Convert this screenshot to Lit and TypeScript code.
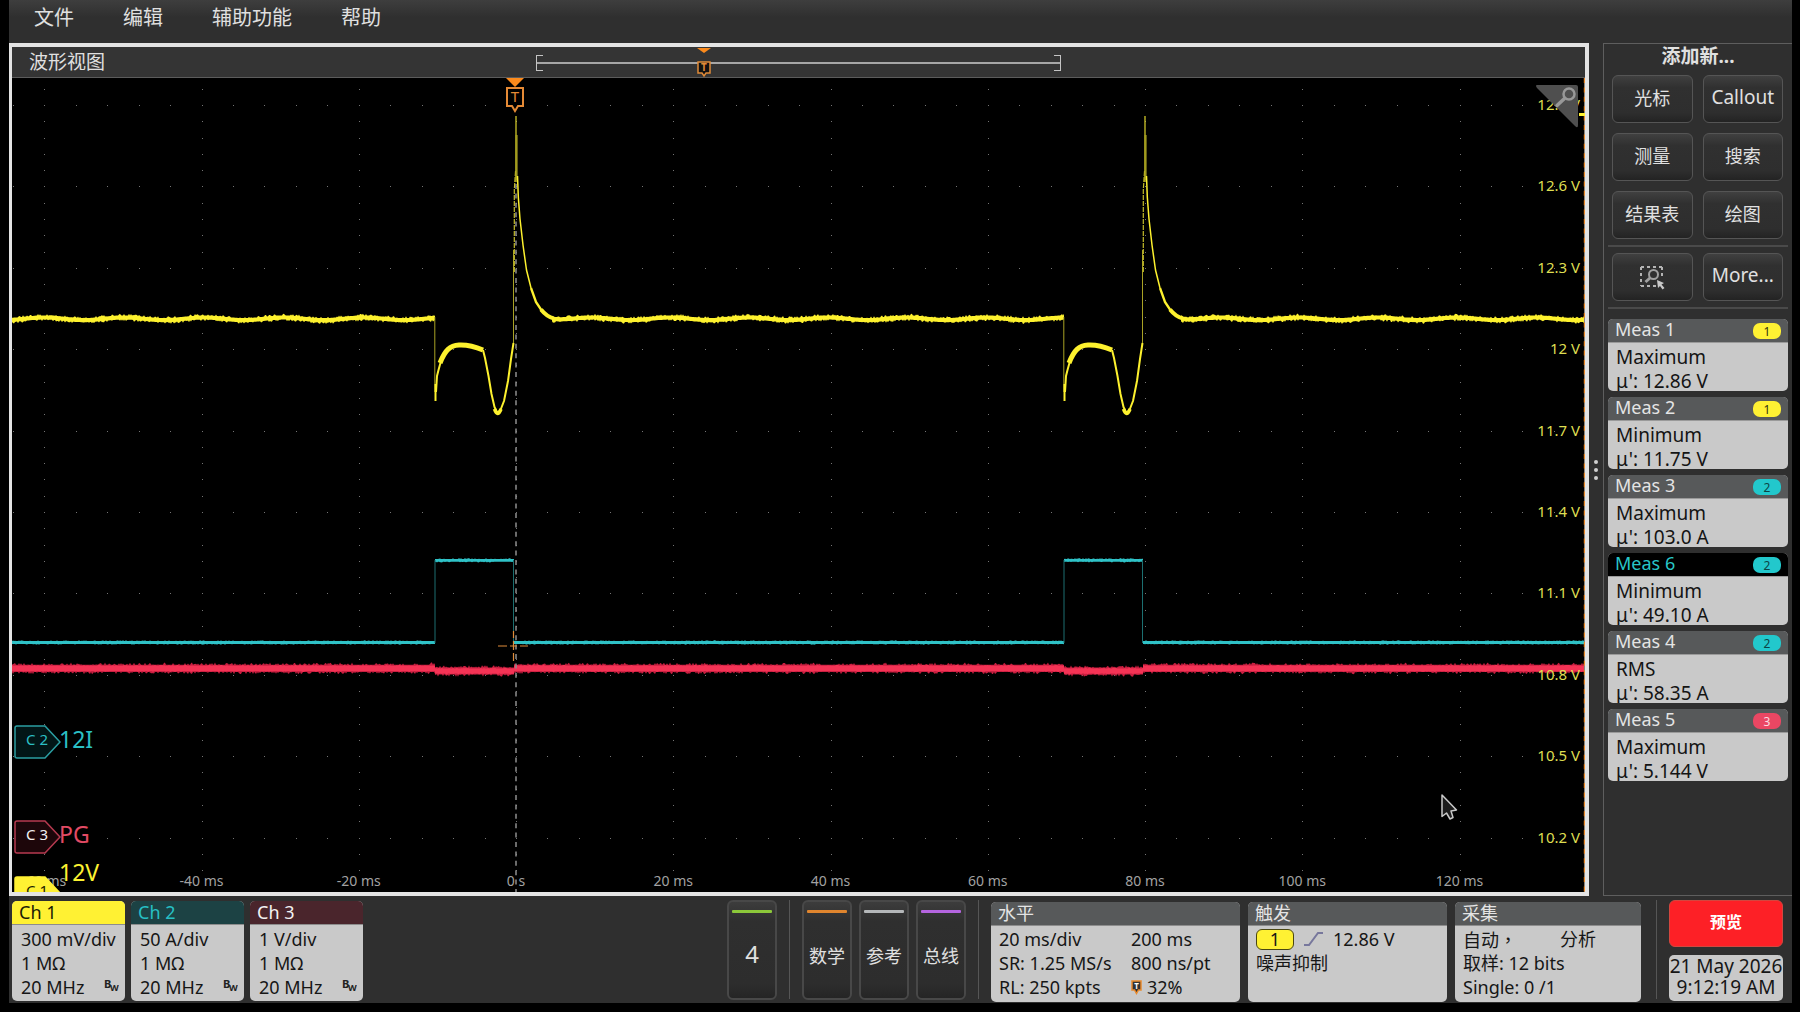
import { LitElement, html, css, svg } from "lit";
import { customElement, property } from "lit/decorators.js";
import { styleMap } from "lit/directives/style-map.js";

/* Extent of the graticule in drawing units; traces are given in these. */
const VIEW = { x: 12, y: 78, w: 1573, h: 814 };
const DIV_X = 157.25;
const DIV_Y = 81.4;
const ZERO_X = 516;
const TOP_Y = 105;
const PERIOD = DIV_X * 4;

const px = (x: number) => `${((x - VIEW.x) / VIEW.w) * 100}%`;
const py = (y: number) => `${((y - VIEW.y) / VIEW.h) * 100}%`;

type Centre = (x: number) => number;

function noise(seed: number) {
  let s = seed;
  return () => {
    s = (s * 1103515245 + 12345) % 2147483648;
    return s / 2147483648;
  };
}

/* A flat stretch of signal, drawn as a band whose edges jitter. */
function band(x0: number, x1: number, centre: Centre, half: number, jitter: number, seed: number) {
  const rnd = noise(seed);
  const top: string[] = [];
  const bottom: string[] = [];
  for (let x = x0; x <= x1; x += 1) {
    const a = rnd() > 0.6 ? rnd() * jitter : 0;
    const b = rnd() > 0.6 ? rnd() * jitter : 0;
    top.push(`${x.toFixed(1)} ${(centre(x) - half - a).toFixed(1)}`);
    bottom.push(`${x.toFixed(1)} ${(centre(x) + half + b).toFixed(1)}`);
  }
  return `M${top.join("L")}L${bottom.reverse().join("L")}Z`;
}

const ripple: Centre = (x) => 318.8 - 1.3 * Math.cos((2 * Math.PI * (x - 44)) / 80);
const rippleAfter = (start: number): Centre => (x) =>
  318.8 - 1.3 * Math.cos((2 * Math.PI * (x - start - 75)) / 79) * Math.min(1, (x - start - 30) / 30);

const VOLT_BANDS = [
  band(12, 435, ripple, 2.1, 1.8, 7),
  band(552, 1064, rippleAfter(ZERO_X), 2.1, 1.8, 21),
  band(552 + PERIOD, 1585, rippleAfter(ZERO_X + PERIOD), 2.1, 1.8, 33),
];

const flat = (y: number): Centre => () => y;
const AMP_BANDS = [
  band(12, 435, flat(642.5), 1.4, 0.8, 3),
  band(435, 514, flat(560.3), 1.4, 0.8, 4),
  band(514, 1064, flat(642.5), 1.4, 0.8, 5),
  band(1064, 1143, flat(560.3), 1.4, 0.8, 6),
  band(1143, 1585, flat(642.5), 1.4, 0.8, 8),
];
const PG_LEVELS = [
  [12, 435, 668.4],
  [435, 514, 671],
  [514, 1064, 668.4],
  [1064, 1143, 671],
  [1143, 1585, 668.4],
];

const MEASUREMENTS = [
  { name: "Meas 1", source: 1, kind: "Maximum", value: "12.86 V" },
  { name: "Meas 2", source: 1, kind: "Minimum", value: "11.75 V" },
  { name: "Meas 3", source: 2, kind: "Maximum", value: "103.0 A" },
  { name: "Meas 6", source: 2, kind: "Minimum", value: "49.10 A", selected: true },
  { name: "Meas 4", source: 2, kind: "RMS", value: "58.35 A" },
  { name: "Meas 5", source: 3, kind: "Maximum", value: "5.144 V" },
];

const CHANNELS = [
  { id: 1, scale: "300 mV/div" },
  { id: 2, scale: "50 A/div" },
  { id: 3, scale: "1 V/div" },
];

const TIMES = ["-60 ms", "-40 ms", "-20 ms", "0 s", "20 ms", "40 ms", "60 ms", "80 ms", "100 ms", "120 ms"];
const VOLTS = ["12.9 V", "12.6 V", "12.3 V", "12 V", "11.7 V", "11.4 V", "11.1 V", "10.8 V", "10.5 V", "10.2 V"];

const shared = css`
  *,
  *::before,
  *::after {
    box-sizing: border-box;
  }
  button {
    font: inherit;
    color: inherit;
    margin: 0;
    padding: 0;
    border: 0;
    background: none;
  }
  h2,
  h3,
  p {
    margin: 0;
    font: inherit;
  }
`;

@customElement("wave-plot")
class WavePlot extends LitElement {
  static styles = [
    shared,
    css`
      :host {
        display: block;
        position: relative;
        overflow: hidden;
        background: #000;
      }
      .traces {
        position: absolute;
        inset: 0;
        width: 100%;
        height: 100%;
      }
      .label {
        position: absolute;
        line-height: 20px;
        white-space: nowrap;
      }
      .time {
        bottom: 1px;
        transform: translateX(-50%);
        font-size: 14px;
        color: #a2a2a2;
      }
      .volt {
        right: 5px;
        transform: translateY(-50%);
        font-size: 15px;
        color: #dede52;
      }
      .marker {
        position: absolute;
        top: 0;
        transform: translateX(-50%);
      }
      .tag {
        position: absolute;
        left: 2px;
        display: flex;
        align-items: flex-start;
      }
      .tag svg {
        display: block;
      }
      .name {
        margin-left: -2px;
        font-size: 23px;
        line-height: 28px;
      }
      .name.raised {
        margin-top: -18px;
      }
      .ch1 {
        color: #fcf231;
      }
      .ch2 {
        color: #2bbfc4;
      }
      .ch3 {
        color: #e24a64;
      }
      .corner {
        position: absolute;
        top: 6px;
        right: 6px;
      }
      .level {
        position: absolute;
        right: 0;
        width: 6px;
        height: 3px;
        background: #fff133;
      }
      .pointer {
        position: absolute;
      }
    `,
  ];

  private dots() {
    const d: string[] = [];
    const x0 = ZERO_X - 3 * DIV_X;
    for (let row = 0; row < 10; row++) {
      const y = Math.round(TOP_Y + row * DIV_Y);
      for (let i = -1; i < 49; i++) d.push(`M${Math.round(x0 + (i * DIV_X) / 5)} ${y}h1`);
    }
    for (let col = 0; col < 10; col++) {
      const x = Math.round(x0 + col * DIV_X);
      for (let i = -1; i < 48; i++) d.push(`M${x} ${Math.round(TOP_Y + (i * DIV_Y) / 5)}h1`);
    }
    return d.join("");
  }

  private pulse(dx: number) {
    return svg`
      <g transform=${`translate(${dx} 0)`} fill="none" stroke="#fdf12e" stroke-linejoin="round">
        <path d="M434.8 317V392" stroke="#a9a224" stroke-width="1" />
        <path d="M435.5 384V401" stroke-width="2" />
        <path d="M436 392L437 376L438.5 370L441 361L445 353.5" stroke-width="2" />
        <path d="M440 363C445 350 450 345.5 459 345C467 344.600 476 347 483 350" stroke-width="5" />
        <path d="M483 350L485 358L488.500 376L491.500 394L494.500 407L497.500 413L500.500 410L504 401L508 381L511 359L513.500 343" stroke-width="2" />
        <path d="M494.500 409Q497.500 418 501 409" stroke-width="3.500" />
        <path d="M513.500 343V250" stroke="#a9a224" stroke-width="1" />
        <path d="M514.300 272V190L515.600 170" stroke="#c4bc2a" stroke-width="1.200" stroke-dasharray="5 1" />
        <path d="M516 116V182" stroke="#e0d62c" stroke-width="1.200" />
        <path d="M516.500 135V180" stroke="#a19a1e" stroke-width="2.200" />
        <path d="M517.500 176L518.300 197L520 219L523 245L526.500 270L531 288" stroke-width="1.500" />
        <path d="M531 288L536 302L542 311" stroke-width="2.300" />
        <path d="M541 309.500Q547 317 554 318.500" stroke-width="4" />
      </g>
      <g transform=${`translate(${dx} 0)`} fill="none" stroke="#1c6f70" stroke-width="1">
        <path d="M435 560V643M513.500 560V643" />
      </g>`;
  }

  render() {
    return html`
      <svg class="traces" viewBox="${VIEW.x} ${VIEW.y} ${VIEW.w} ${VIEW.h}" preserveAspectRatio="none">
        <path d=${this.dots()} stroke="#757575" stroke-width="1" shape-rendering="crispEdges" />
        ${AMP_BANDS.map((d) => svg`<path d=${d} fill="#2fc2c7" />`)}
        ${PG_LEVELS.map(
          ([a, b, y], i) => svg`
            <path d=${band(a, b, flat(y), 3.6, 2.2, 40 + i)} fill="#c91f40" />
            <path d=${band(a, b, flat(y), 2.6, 1, 60 + i)} fill="#f43355" />`
        )}
        ${VOLT_BANDS.map((d) => svg`<path d=${d} fill="#fdf12e" />`)}
        <path d="M516 184V892" stroke="#8e8e8e" stroke-width="1.500" stroke-dasharray="5 4.400" />
        ${[0, PERIOD].map((dx) => this.pulse(dx))}
        <path d="M498 646H507M510 646H517M520 646H528M513.500 631V638M513.500 641V650M513.500 653V661" stroke="#e08c3a" stroke-width="1.200" fill="none" />
        <path d="M1584.500 78V892" stroke="#8f877c" stroke-width="1" />
        <path d="M1584.500 78V892" stroke="#e8892b" stroke-width="1.400" stroke-dasharray="5 4.400" />
      </svg>
      ${TIMES.map(
        (t, i) => html`<span class="label time" style=${styleMap({ left: px(ZERO_X + (i - 3) * DIV_X) })}>${t}</span>`
      )}
      ${VOLTS.map(
        (v, i) => html`<span class="label volt" style=${styleMap({ top: py(TOP_Y - 1 + i * DIV_Y) })}>${v}</span>`
      )}
      <svg class="marker" style=${styleMap({ left: px(ZERO_X - 1) })} width="22" height="36" viewBox="0 0 22 36">
        <path d="M2 0H20L11 9Z" fill="#fb8a1c" />
        <path d="M3 10H19V28H14L11 33L8 28H3Z" fill="#000" stroke="#e58a35" stroke-width="2" />
        <text x="11" y="24" text-anchor="middle" font-size="15" fill="#e58a35">T</text>
      </svg>
      <span class="level" style=${styleMap({ top: py(113) })}></span>
      <svg class="corner" width="44" height="46" viewBox="0 0 44 46">
        <path d="M2 1H41Q43 1 43 3V41Q43 45 40 42L2 4Q0 1 2 1Z" fill="#4f4f4f" />
        <circle cx="34" cy="10" r="5.500" fill="none" stroke="#989898" stroke-width="2.500" />
        <path d="M29.500 14.500L22 21.500" stroke="#989898" stroke-width="3.500" stroke-linecap="round" />
      </svg>
      ${this.tag(2, "12I", 725, "#021617", "#2b9fa3", "#2bbfc4")}
      ${this.tag(3, "PG", 820, "#1d060a", "#b63a50", "#f2f2f2")}
      ${this.tag(1, "12V", 876, "#fff133", "#fff133", "#1a1a00")}
      <svg class="pointer" style=${styleMap({ left: px(1440), top: py(793) })} width="20" height="28" viewBox="0 0 20 28">
        <path d="M2 2V23.500L6.500 20L10 26L13 24.500L11 18L16.500 17Z" fill="#1c1c1c" stroke="#c9c9c9" stroke-width="1.500" stroke-linejoin="round" />
      </svg>
    `;
  }

  private tag(id: number, name: string, y: number, fill: string, edge: string, ink: string) {
    return html`<div class="tag ch${id}" style=${styleMap({ top: py(y) })}>
      <svg width="47" height="34" viewBox="0 0 47 34">
        <path d="M3 1H31L46 17L31 33H3Q1 33 1 31V3Q1 1 3 1Z" fill=${fill} stroke=${edge} stroke-width="1.500" />
        <text x="23" y="20" text-anchor="middle" font-size="15" fill=${ink}>C ${id}</text>
      </svg>
      <span class=${id === 1 ? "name raised" : "name"}>${name}</span>
    </div>`;
  }
}

@customElement("measure-card")
class MeasureCard extends LitElement {
  @property({ type: Object }) data!: (typeof MEASUREMENTS)[number];

  static styles = [
    shared,
    css`
      :host {
        display: block;
      }
      .card {
        height: 72px;
        border-radius: 5px;
        overflow: hidden;
        background: #c9c9c9;
        color: #141414;
        font-size: 18px;
      }
      .head {
        display: flex;
        align-items: center;
        justify-content: space-between;
        height: 24px;
        padding: 0 7px;
        background: #57595a;
        color: #e4e4e4;
        border-bottom: 1px solid #9a9a9a;
      }
      .head h3 {
        line-height: 20px;
        padding-bottom: 3px;
      }
      .selected {
        background: #000;
        color: #28c6c8;
      }
      .source {
        width: 28px;
        height: 16px;
        border-radius: 7px;
        font-size: 12px;
        line-height: 18px;
        text-align: center;
        color: #33340f;
        background: #fff133;
      }
      .s2 {
        background: #22c8cc;
        color: #0c4547;
      }
      .s3 {
        background: #ea4763;
        color: #fbdde2;
      }
      .lines {
        padding: 2px 0 0 8px;
        font-size: 19px;
        line-height: 24px;
      }
    `,
  ];

  render() {
    const m = this.data;
    return html`<section class="card">
      <div class=${m.selected ? "head selected" : "head"}>
        <h3>${m.name}</h3>
        <span class="source s${m.source}">${m.source}</span>
      </div>
      <div class="lines">
        <p>${m.kind}</p>
        <p>μ': ${m.value}</p>
      </div>
    </section>`;
  }
}

@customElement("app-root")
class AppRoot extends LitElement {
  static styles = [
    shared,
    css`
      :host {
        display: flex;
        flex-direction: column;
        min-height: 100vh;
        box-sizing: border-box;
        padding: 0 8px 9px 9px;
        background: #000;
        font-family: "Noto Sans", "Noto Sans CJK SC", sans-serif;
        font-size: 18px;
        color: #e0e0e0;
      }
      .menu {
        display: flex;
        align-items: flex-start;
        gap: 49px;
        height: 43px;
        padding: 3px 25px 0;
        background: linear-gradient(#3e3e3e, #2f2f2f 40%);
        font-size: 20px;
      }
      .menu button {
        line-height: 29px;
      }
      .main {
        flex: 1;
        display: grid;
        grid-template-columns: minmax(0, 1fr) 14px 189px;
        background: #2f2f2f;
      }
      .view {
        display: flex;
        flex-direction: column;
        border: 4px solid #e4e4e4;
        border-left-width: 3px;
      }
      .view-head {
        position: relative;
        height: 31px;
        padding-left: 17px;
        background: #343434;
        border-bottom: 1px solid #5c5c5c;
        font-size: 19px;
        line-height: 31px;
      }
      .view-head h2 {
        height: 30px;
      }
      .overview {
        position: absolute;
        top: 8px;
        left: calc(100% / 3);
        width: calc(100% / 3);
        height: 16px;
      }
      .overview::before {
        content: "";
        position: absolute;
        top: 7px;
        left: 0;
        right: 0;
        height: 2px;
        background: #a6a6a6;
      }
      .end {
        position: absolute;
        top: 0;
        width: 7px;
        height: 16px;
        border: 1px solid #c4c4c4;
      }
      .left {
        left: 0;
        border-right: 0;
      }
      .right {
        right: 0;
        border-left: 0;
      }
      .trigger-pos {
        position: absolute;
        top: -8px;
        left: 32%;
        transform: translateX(-50%);
      }
      wave-plot {
        flex: 1;
      }
      .grip {
        display: flex;
        flex-direction: column;
        align-items: center;
        justify-content: center;
        gap: 4px;
      }
      .grip i {
        width: 4px;
        height: 4px;
        border-radius: 50%;
        background: #cfcfcf;
      }
      .side {
        display: flex;
        flex-direction: column;
        gap: 6px;
        padding: 0 4px 0 4px;
        border: 1px solid #5e5e5e;
        border-right: 0;
      }
      .side-title {
        font-size: 19px;
        font-weight: 700;
        line-height: 25px;
        text-align: center;
      }
      .keys {
        display: grid;
        grid-template-columns: 1fr 1fr;
        gap: 10px;
        padding: 0 5px 6px 4px;
        border-bottom: 2px solid #4a4a4a;
      }
      .key {
        display: flex;
        align-items: center;
        justify-content: center;
        height: 48px;
        padding-bottom: 4px;
        border: 1px solid #555;
        border-radius: 6px;
        background: linear-gradient(#404040, #303030 25%, #2e2e2e 80%, #232323);
        font-size: 18px;
      }
      .key.latin {
        font-size: 19px;
        padding-bottom: 5px;
      }
      .key.glyph {
        padding-bottom: 0;
      }
      .cards {
        display: flex;
        flex-direction: column;
        gap: 6px;
        padding-top: 4px;
      }
      .dock {
        display: flex;
        align-items: flex-start;
        gap: 6px;
        min-height: 107px;
        padding: 4px 9px 1px 3px;
        background: #2f2f2f;
      }
      .badge {
        height: 100px;
        border-radius: 5px;
        overflow: hidden;
        background: #c9c9c9;
        color: #161616;
      }
      .badge-head {
        height: 24px;
        padding-left: 7px;
        line-height: 22px;
        background: #57595a;
        color: #e4e4e4;
        border-bottom: 1px solid #8d8d8d;
      }
      .badge-body {
        padding: 1px 8px 0;
        line-height: 24px;
        white-space: nowrap;
      }
      .channel {
        width: 113px;
        margin-top: 1px;
      }
      .channel .badge-body {
        padding: 2px 6px 0 9px;
      }
      .h1 {
        background: #fff133;
        color: #1b1b06;
      }
      .h2 {
        background: #1c4244;
        color: #27bfc3;
      }
      .h3 {
        background: #4a252c;
        color: #f2f2f2;
      }
      .row {
        display: flex;
        align-items: center;
        height: 24px;
      }
      .limit {
        justify-content: space-between;
      }
      .tools {
        display: flex;
        align-items: stretch;
        gap: 12px;
        margin-left: auto;
      }
      .rule {
        width: 1px;
        height: 99px;
        background: #565656;
      }
      .tool-set {
        display: flex;
        gap: 7px;
      }
      .tool {
        position: relative;
        width: 50px;
        height: 100px;
        padding-top: 10px;
        border: 2px solid #484848;
        border-radius: 6px;
        background: linear-gradient(#3c3c3c, #2f2f2f 20%, #2d2d2d 85%, #252525);
        text-align: center;
        font-size: 18px;
      }
      .tool::before {
        content: "";
        position: absolute;
        top: 8px;
        left: 3px;
        right: 3px;
        height: 3px;
        border-radius: 1px;
        background: var(--bar);
      }
      .count {
        padding-top: 7px;
        font-size: 24px;
      }
      .green {
        --bar: #8cc83a;
      }
      .orange {
        --bar: #e0852e;
      }
      .grey {
        --bar: #b4b7b9;
      }
      .violet {
        --bar: #b565e0;
      }
      .settings {
        display: flex;
        gap: 8px;
        padding: 2px 3px 0 0;
      }
      .horizontal {
        width: 249px;
      }
      .pairs {
        display: grid;
        grid-template-columns: 132px 1fr;
      }
      .trigger {
        width: 199px;
      }
      .acquire {
        width: 186px;
      }
      .source {
        width: 38px;
        height: 21px;
        margin-right: 10px;
        border: 1px solid #4a4710;
        border-radius: 6px;
        background: #fff133;
        text-align: center;
        line-height: 18px;
      }
      .slope {
        margin-right: 9px;
      }
      .t-icon {
        margin-right: 5px;
      }
      .auto {
        width: 97px;
        font-family: "Noto Sans CJK TC", sans-serif;
      }
      .status {
        display: flex;
        flex-direction: column;
        gap: 8px;
        width: 114px;
      }
      .preview {
        height: 47px;
        padding-bottom: 5px;
        border: 1px solid #d2473f;
        border-radius: 6px;
        background: #fd2026;
        color: #fff;
        font-size: 16px;
        font-weight: 700;
      }
      .clock {
        height: 46px;
        padding-top: 1px;
        border-radius: 5px;
        background: #c9c9c9;
        color: #161616;
        font-size: 19px;
        line-height: 21px;
        text-align: center;
        white-space: nowrap;
      }
    `,
  ];

  render() {
    return html`
      <nav class="menu">
        ${["文件", "编辑", "辅助功能", "帮助"].map((m) => html`<button type="button">${m}</button>`)}
      </nav>
      <main class="main">
        <section class="view">
          <header class="view-head">
            <h2>波形视图</h2>
            <div class="overview">
              <span class="end left"></span>
              <span class="end right"></span>
              <svg class="trigger-pos" width="18" height="32" viewBox="0 0 18 32">
                <path d="M2 1H16L9 6Z" fill="#fb8a1c" />
                <path d="M3 15H15V26H11L9 29L7 26H3Z" fill="#111" stroke="#e08a38" stroke-width="1.500" />
                <text x="9" y="24" text-anchor="middle" font-size="10" font-weight="700" fill="#e08a38">T</text>
              </svg>
            </div>
          </header>
          <wave-plot></wave-plot>
        </section>
        <div class="grip"><i></i><i></i><i></i></div>
        <aside class="side">
          <h2 class="side-title">添加新...</h2>
          <div class="keys">
            <button type="button" class="key">光标</button>
            <button type="button" class="key latin">Callout</button>
            <button type="button" class="key">测量</button>
            <button type="button" class="key">搜索</button>
            <button type="button" class="key">结果表</button>
            <button type="button" class="key">绘图</button>
          </div>
          <div class="keys">
            <button type="button" class="key glyph" aria-label="Zoom">
              <svg width="26" height="26" viewBox="0 0 26 26" fill="none">
                <path d="M2 3H24M2 22H18" stroke="#b4b4b4" stroke-width="2" stroke-dasharray="3 3" />
                <path d="M2 3V22M23 3V15" stroke="#b4b4b4" stroke-width="2" stroke-dasharray="3 3" />
                <circle cx="14.500" cy="10.500" r="4.500" stroke="#a0a0a0" stroke-width="2" />
                <path d="M11 14L6.500 18" stroke="#a0a0a0" stroke-width="3" />
                <path d="M18 16L25 19L22.500 20.500L25.500 24L23.500 25.500L21 22L19 24Z" fill="#c8c8c8" />
              </svg>
            </button>
            <button type="button" class="key latin">More...</button>
          </div>
          <div class="cards">
            ${MEASUREMENTS.map((m) => html`<measure-card .data=${m}></measure-card>`)}
          </div>
        </aside>
      </main>
      <footer class="dock">
        ${CHANNELS.map(
          (c) => html`<section class="badge channel">
            <h3 class="badge-head h${c.id}">Ch ${c.id}</h3>
            <div class="badge-body">
              <div class="row">${c.scale}</div>
              <div class="row">1 MΩ</div>
              <div class="row limit">
                <span>20 MHz</span>
                <svg width="15" height="18" viewBox="0 0 15 18" fill="#222" font-weight="700">
                  <text x="0" y="10" font-size="11">B</text>
                  <text x="6" y="13" font-size="9">W</text>
                </svg>
              </div>
            </div>
          </section>`
        )}
        <div class="tools">
          <button type="button" class="tool count green">4</button>
          <span class="rule"></span>
          <div class="tool-set">
            <button type="button" class="tool orange">数学</button>
            <button type="button" class="tool grey">参考</button>
            <button type="button" class="tool violet">总线</button>
          </div>
          <span class="rule"></span>
          <div class="settings">
            <section class="badge horizontal">
              <h3 class="badge-head">水平</h3>
              <div class="badge-body pairs">
                <span>20 ms/div</span><span>200 ms</span>
                <span>SR: 1.25 MS/s</span><span>800 ns/pt</span>
                <span>RL: 250 kpts</span>
                <span class="row">
                  <svg class="t-icon" width="11" height="15" viewBox="0 0 11 15">
                    <path d="M1 1H10V10H7.500L5.500 13.500L3.500 10H1Z" fill="#333" stroke="#e98a2c" stroke-width="1.500" />
                    <text x="5.500" y="9" text-anchor="middle" font-size="8" font-weight="700" fill="#fff">T</text>
                  </svg>
                  32%
                </span>
              </div>
            </section>
            <section class="badge trigger">
              <h3 class="badge-head">触发</h3>
              <div class="badge-body">
                <div class="row">
                  <span class="source">1</span>
                  <svg class="slope" width="20" height="16" viewBox="0 0 20 16">
                    <path d="M0 14H5L14 2H19" fill="none" stroke="#77779c" stroke-width="2" />
                  </svg>
                  12.86 V
                </div>
                <div class="row">噪声抑制</div>
              </div>
            </section>
            <section class="badge acquire">
              <h3 class="badge-head">采集</h3>
              <div class="badge-body">
                <div class="row"><span class="auto" lang="zh-TW">自动，</span><span>分析</span></div>
                <div class="row">取样: 12 bits</div>
                <div class="row">Single: 0 /1</div>
              </div>
            </section>
          </div>
          <span class="rule"></span>
          <div class="status">
            <button type="button" class="preview">预览</button>
            <div class="clock">21 May 2026<br />9:12:19 AM</div>
          </div>
        </div>
      </footer>
    `;
  }
}
